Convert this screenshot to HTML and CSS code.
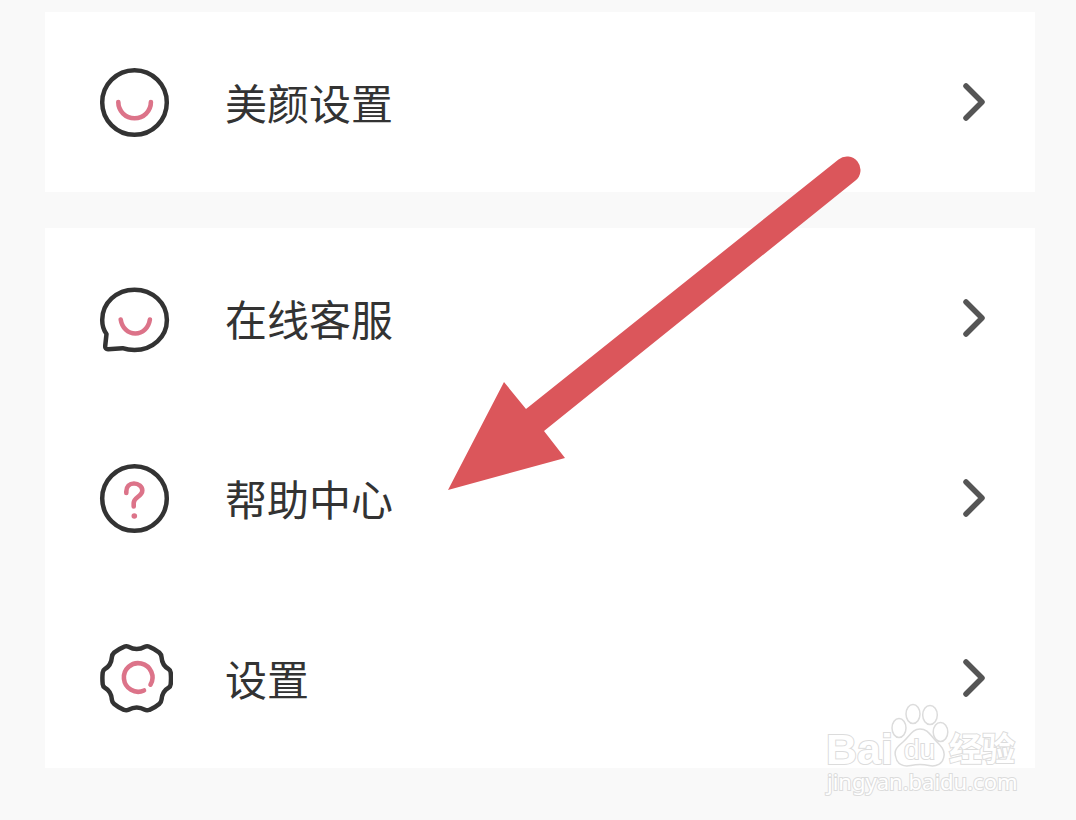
FILE: index.html
```
<!DOCTYPE html>
<html lang="zh-CN">
<head>
  <meta charset="UTF-8" />
  <meta name="viewport" content="width=device-width, initial-scale=1.0" />
  <title>设置</title>
  <link rel="stylesheet" href="styles.css">
</head>
<body>
  <main class="page">
    <nav class="card">
      <a class="row" href="#beauty">
        <svg class="icon" viewBox="0 0 76 76" aria-hidden="true">
          <circle cx="37.5" cy="38.5" r="32.3" />
          <path class="pink" d="M21.3 38a16.3 16.3 0 0 0 32.6 0" />
        </svg>
        <span class="label">美颜设置</span>
        <svg class="chevron" viewBox="0 0 24 40" aria-hidden="true"><path d="M4 4l16 16L4 36" /></svg>
      </a>
    </nav>

    <nav class="card">
      <a class="row" href="#service">
        <svg class="icon" viewBox="0 0 76 76" aria-hidden="true">
          <path d="M9.5 54C6.5 50 5.2 45 5.2 40C5.2 23 19.5 9.7 37.5 9.7S69.9 23 69.9 40S55.5 70 37.5 70C33 70 29 69.3 25.5 68.2L11 69.2C9 69.2 8 68 8.2 66Z" />
          <path class="pink" d="M23.7 39.5C25 48 31 53.5 38.300 53.500S51.600 48 52.900 39.500" />
        </svg>
        <span class="label">在线客服</span>
        <svg class="chevron" viewBox="0 0 24 40" aria-hidden="true"><path d="M4 4l16 16L4 36" /></svg>
      </a>
      <a class="row" href="#help">
        <svg class="icon" viewBox="0 0 76 76" aria-hidden="true">
          <circle cx="37.5" cy="38.5" r="32.3" />
          <path class="pink" d="M29.3 33V31.500C29.300 26.500 32.500 23.500 37 23.500S45.300 26.500 45.300 30.500C45.300 36.500 36.700 37 36.700 43V46.500" />
          <circle class="dot" cx="37.3" cy="56" r="2.8" />
        </svg>
        <span class="label">帮助中心</span>
        <svg class="chevron" viewBox="0 0 24 40" aria-hidden="true"><path d="M4 4l16 16L4 36" /></svg>
      </a>
      <a class="row" href="#settings">
        <svg class="icon" viewBox="0 0 76 76" aria-hidden="true">
          <path d="M31.5 6.8C37 9.8 42.4 9.800 47.900 6.800Q50 5.700 52.500 6.800Q58 9 62.200 12.500Q64.300 14.500 64.500 17C65 23.500 67 26.500 71.500 29Q73.500 30.200 73.700 32.500Q74.300 38.300 73.700 44.200Q73.500 46.500 71.500 47.700C67 50.200 65 53.200 64.500 59.700Q64.300 62.200 62.200 64Q58 67.600 52.500 69.800Q50 70.900 47.900 69.800C42.400 66.800 37 66.800 31.500 69.800Q29.400 70.900 26.900 69.800Q21.400 67.600 17.200 64Q15.100 62.200 14.900 59.700C14.400 53.200 12.400 50.200 7.900 47.700Q5.900 46.500 5.700 44.200Q5.100 38.300 5.700 32.500Q5.900 30.200 7.900 29C12.400 26.500 14.400 23.500 14.900 17Q15.100 14.500 17.200 12.500Q21.400 9 26.900 6.800Q29.400 5.700 31.500 6.800Z" />
          <path class="pink" d="M53.5 44.700A14.300 14.300 0 1 0 47 50.500" />
        </svg>
        <span class="label">设置</span>
        <svg class="chevron" viewBox="0 0 24 40" aria-hidden="true"><path d="M4 4l16 16L4 36" /></svg>
      </a>
    </nav>

    <svg class="arrow" viewBox="0 0 414 336" aria-hidden="true">
      <path d="M0 334L56 226L78 253L390.5 3.500A13.500 13.500 0 0 1 407.500 24.500L96 275L117 302Z" />
    </svg>

    <!-- watermark -->
    <svg class="watermark" viewBox="0 0 200 100" aria-hidden="true">
      <text class="wm-bai" x="3" y="64">Bai</text>
      <ellipse cx="76" cy="28" rx="7" ry="9.5" />
      <ellipse cx="90" cy="14" rx="7" ry="9.5" />
      <ellipse cx="107" cy="15" rx="7.3" ry="9.5" />
      <ellipse cx="117.5" cy="32" rx="7.3" ry="9.5" />
      <path d="M97 29C89 29 87 36 80 42C74 47 71 50 72.5 56C74 65 81 67 88 65.500Q97 63.500 106 65.500C113 67 120 64 121 56C122 50 118 46 113 41C107 35 105 29 97 29Z" />
      <text class="wm-du" x="81" y="59">du</text>
      <text class="wm-cjk" x="126" y="61">经验</text>
      <text class="wm-url" x="4" y="90">jingyan.baidu.com</text>
    </svg>
  </main>
</body>
</html>
```
FILE: styles.css
```
body {
  margin: 0;
  background: #f9f9f9;
  color: #333;
  font-family: "Noto Sans CJK SC", sans-serif;
}
.page {
  position: relative;
  display: flex;
  flex-direction: column;
  gap: 36px;
  padding: 12px 41px 52px 45px;
}
.card { background: #fff; }
.row {
  display: flex;
  align-items: center;
  gap: 52px;
  padding: 52px 49px 52px 52px;
  color: inherit;
  text-decoration: none;
}
.icon {
  width: 76px;
  height: 76px;
  fill: none;
  stroke: #333;
  stroke-width: 4.5;
  stroke-linecap: round;
  stroke-linejoin: round;
}
.icon .pink { stroke: #dc7389; stroke-width: 4.6; }
.icon .dot { fill: #dc7389; stroke: none; }
.label {
  flex: 1;
  font-size: 42px;
  line-height: 60px;
}
.chevron {
  width: 24px;
  height: 40px;
  fill: none;
  stroke: #555;
  stroke-width: 5.5;
  stroke-linecap: round;
  stroke-linejoin: round;
}
.arrow {
  position: absolute;
  top: 156px;
  left: 448px;
  width: 414px;
  height: 336px;
  fill: #db565b;
  pointer-events: none;
}
.watermark {
  position: absolute;
  top: 700px;
  right: 53px;
  width: 200px;
  height: 100px;
  fill: #fff;
  stroke: #dcdcdc;
  stroke-width: 1.5;
  pointer-events: none;
}
.watermark text { paint-order: stroke; stroke-width: 2; }
.wm-bai { font: bold 43px "Liberation Sans", sans-serif; }
.wm-du { font: 28px "Liberation Sans", sans-serif; }
.wm-cjk { font: bold 33px "Noto Sans CJK SC", sans-serif; }
.wm-url { font: 22px "Noto Sans", sans-serif; }
```
